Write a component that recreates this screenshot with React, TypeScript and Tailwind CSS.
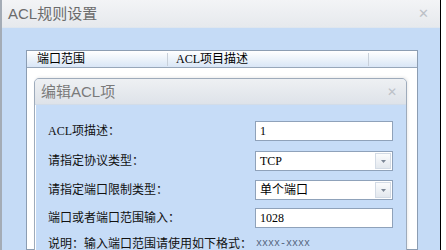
import React from "react";

const cjk = "font-['SimSun','Liberation_Serif','Noto_Sans_CJK_SC',serif]";

function Arrow() {
  return (
    <div className="m-[1px] flex h-[16px] w-[16px] items-center justify-center border border-[#d3dbe5] bg-gradient-to-b from-[#fbfcfd] to-[#e3e8ee]">
      <svg width="5" height="3" viewBox="0 0 5 3">
        <path d="M0 0h5L2.5 3z" fill="#7c8796" />
      </svg>
    </div>
  );
}

function Field({ value, select }: { value: string; select?: boolean }) {
  return (
    <div className="flex h-[20px] w-[138px] items-center border border-[#8fa2ba] bg-white">
      <span className={`flex-1 pl-[4px] text-[12px] leading-none text-black ${cjk}`}>{value}</span>
      {select && <Arrow />}
    </div>
  );
}

function Row({ label, children, className }: { label: string; children: React.ReactNode; className: string }) {
  return (
    <div className={`flex h-[20px] items-center ${className}`}>
      <span className={`w-[207px] text-[12px] leading-none text-[#111] ${cjk}`}>{label}</span>
      {children}
    </div>
  );
}

export default function App() {
  return (
    <div className="flex h-[250px] w-[446px] overflow-hidden bg-white">
      <div className="flex h-full w-[441px] flex-col border-l-2 border-r border-l-[#a4acb6] border-r-black">
        {/* window title */}
        <div className="flex h-[28px] shrink-0 items-center justify-between border-b border-[#dfe6ee] bg-gradient-to-b from-[#f3f4f6] to-[#e6e9ed] pl-[6px] pr-[11px]">
          <span className="font-['Liberation_Sans','Noto_Sans_CJK_SC',sans-serif] text-[15px] leading-none text-[#6b6b6b]">
            ACL规则设置
          </span>
          <span className="text-[13px] leading-none text-[#bcc1c7]">✕</span>
        </div>

        {/* window body */}
        <div className="relative flex-1 bg-[#c5dbf6] pl-[24px] pt-[22px]">
          <div className="h-full w-[392px] border border-[#8c9db2] bg-white">
            <div className={`flex h-[17px] items-center border-b border-[#97a7ba] bg-gradient-to-b from-[#ffffff] to-[#d9e6f6] text-[12px] leading-none text-black ${cjk}`}>
              <span className="w-[140px] pl-[10px]">端口范围</span>
              <span className="h-[13px] w-px bg-[#c8d0da]" />
              <span className="w-[200px] pl-[8px]">ACL项目描述</span>
              <span className="h-[13px] w-px bg-[#c8d0da]" />
            </div>
          </div>

          {/* edit dialog */}
          <div className="absolute left-[32px] top-[50px] h-[200px] w-[373px] overflow-hidden rounded-t-[5px] border border-[#9eabbb] bg-[#c6dcf7] shadow-[1px_-1px_3px_rgba(0,0,0,0.08)]">
            <div className="flex h-[26px] items-center justify-between border-b border-[#d2dce8] bg-gradient-to-b from-[#eef0f3] to-[#dee3e9] pl-[6px] pr-[9px]">
              <span className="font-['Liberation_Sans','Noto_Sans_CJK_SC',sans-serif] text-[15px] leading-none text-[#7a7a7a]">
                编辑ACL项
              </span>
              <span className="text-[12px] leading-none text-[#bcc1c7]">✕</span>
            </div>
            <div className="flex flex-col border-l border-white pl-[12px]">
              <Row label="ACL项描述：" className="mt-[16px]">
                <Field value="1" />
              </Row>
              <Row label="请指定协议类型：" className="mt-[10px]">
                <Field value="TCP" select />
              </Row>
              <Row label="请指定端口限制类型：" className="mt-[9px]">
                <Field value="单个端口" select />
              </Row>
              <Row label="端口或者端口范围输入：" className="mt-[8px]">
                <Field value="1028" />
              </Row>
              <div className="mt-[6px] flex h-[20px] items-center">
                <span className={`text-[12px] leading-none text-[#111] ${cjk}`}>说明：输入端口范围请使用如下格式：</span>
                <span className="pl-[4px] font-['Liberation_Mono',monospace] text-[10px] leading-none text-[#55657c]">xxxx-xxxx</span>
              </div>
            </div>
          </div>
        </div>
      </div>
    </div>
  );
}
